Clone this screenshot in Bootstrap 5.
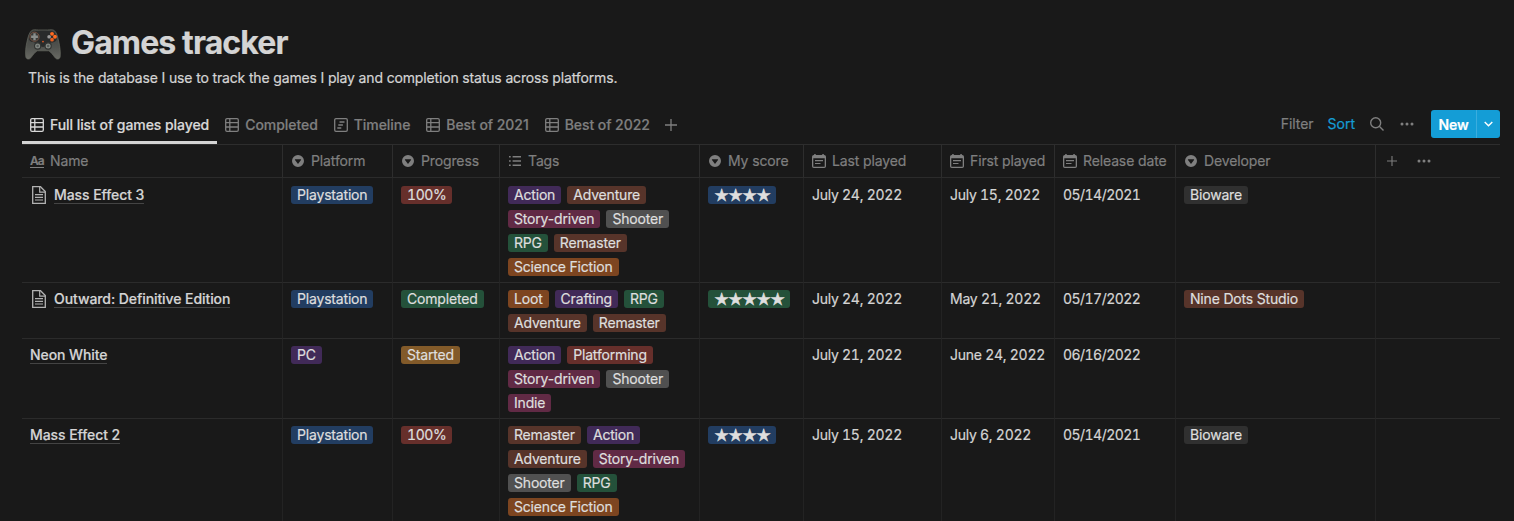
<!DOCTYPE html>
<html lang="en" data-bs-theme="dark">
<head>
<meta charset="utf-8">
<meta name="viewport" content="width=device-width, initial-scale=1">
<title>Games tracker</title>
<link href="https://cdn.jsdelivr.net/npm/bootstrap@5.3.0/dist/css/bootstrap.min.css" rel="stylesheet">
<style>
body{background:#191919;color:#d4d4d4;font-family:Inter,"Liberation Sans",sans-serif;font-size:14px;line-height:20px;height:521px;overflow:hidden;-webkit-text-stroke:.2px currentColor}
svg{flex:none;display:block}
.page{padding:23px 14px 0 22px}
.page-icon{margin:3px 10px 0 2px}
.page-title{font-size:32px;line-height:40px;font-weight:700;letter-spacing:-.88px;color:#d4d4d4}
.intro{padding:5px 6px 0;height:45px;letter-spacing:-.15px}
.views{height:36px}
.view-tab{height:36px;padding:1px 8px 0;color:#7f7f7f;font-weight:500;gap:6px;border-bottom:3px solid transparent;white-space:nowrap;letter-spacing:-.06px}
.view-tab.active{color:#d8d8d8;border-color:#d4d4d4;letter-spacing:-.06px}
.add-view{margin-left:-1px}
.tool{color:#7f7f7f}
.filter{margin-right:14px;letter-spacing:-.05px}
.search{margin:0 15px}
.more{margin:0 17px 0 1px}
.accent{color:#159cd3}
.new-btn{--bs-btn-bg:#149dd6;--bs-btn-color:#fff;--bs-btn-border-width:0;--bs-btn-border-radius:3px;height:28px;font-size:14px;line-height:20px;font-weight:600;padding:0;letter-spacing:-.1px}
.new-btn .label{width:45px;text-align:center;padding-top:1px}
.split{width:24px;padding-left:7px;border-left:1px solid #3badde}
.games{table-layout:fixed;border-collapse:separate;border-spacing:0;width:1478px;margin:0;border-top:1px solid #2d2d2d}
.games th,.games td{border-right:1px solid #232323;border-bottom:1px solid #2b2b2b;vertical-align:top;white-space:nowrap}
.games th{height:33px;padding:0 8px;font-weight:400;color:#7f7f7f;vertical-align:middle;border-right-color:#2d2d2d;letter-spacing:-.13px}
.games th:last-child,.games td:last-child{border-right:0}
.games th:last-child{padding-left:7px}
.games td{padding:7px 8px 6px}
.games tbody tr:first-child td{padding-top:8px}
.games td:nth-child(3){font-variant-numeric:tabular-nums}
.games td:nth-child(3) .red{letter-spacing:-.4px}
.head{gap:6px}
.head svg[width="12"]{margin-left:1px;margin-right:1px}
.aa{font-size:12px;line-height:12px;font-weight:600;border-bottom:1px solid #7f7f7f;width:14px;letter-spacing:-1px}
.line{height:18px;line-height:18px;font-variant-numeric:tabular-nums;letter-spacing:-.26px}
.games td:nth-child(8) .line{letter-spacing:-.54px}
.page-glyph{margin-left:2px;margin-right:8px}
.game{font-weight:500;border-bottom:1px solid #444;line-height:18px;height:18px;letter-spacing:-.08px;font-variant-numeric:normal}
.tags{display:flex;flex-wrap:wrap;gap:6px}
.tagx{height:18px;line-height:18px;border-radius:3px;padding:0 6px;color:#dedede;background:#303030;letter-spacing:-.18px}
.blue{background:#223d61}.purple{background:#412a58}.red{background:#662f2b}.brown{background:#57342a}
.pink{background:#612a45}.gray{background:#505050}.green{background:#24513a}.orange{background:#7d4520}.yellow{background:#825a29}
.stars{font-family:"DejaVu Sans",sans-serif;font-size:17px;letter-spacing:-1.24px;padding:0 6px;-webkit-text-stroke-width:.5px}
</style>
</head>
<body>
<svg width="0" height="0" class="position-absolute">
<symbol id="i-table" viewBox="0 0 14 14"><path d="M2 .7h10A1.3 1.3 0 0 1 13.3 2v10a1.3 1.3 0 0 1-1.3 1.3H2A1.3 1.3 0 0 1 .7 12V2A1.3 1.3 0 0 1 2 .7zM.7 4.7h12.6M.7 9h12.6M4.8.7v12.6" fill="none" stroke="currentColor" stroke-width="1.3"/></symbol>
<symbol id="i-timeline" viewBox="0 0 14 14"><path d="M2 .7h10A1.3 1.3 0 0 1 13.3 2v10a1.3 1.3 0 0 1-1.3 1.3H2A1.3 1.3 0 0 1 .7 12V2A1.3 1.3 0 0 1 2 .7zM5.500 4h5M4.300 7h4.600M3.300 10h4" fill="none" stroke="currentColor" stroke-width="1.3"/></symbol>
<symbol id="i-select" viewBox="0 0 12 12"><path fill="currentColor" fill-rule="evenodd" d="M6 0a6 6 0 1 1 0 12A6 6 0 0 1 6 0zM3.300 4.200a.4.4 0 0 0-.3.7l2.600 3.500a.5.5 0 0 0 .8 0L9 4.900a.4.4 0 0 0-.3-.7z"/></symbol>
<symbol id="i-date" viewBox="0 0 14 14"><path fill="currentColor" fill-rule="evenodd" d="M2.200 0h1.500v1h6.600V0h1.500v1h.400A1.800 1.800 0 0 1 14 2.800v9.400a1.800 1.800 0 0 1-1.800 1.800H1.800A1.800 1.800 0 0 1 0 12.200V2.800A1.800 1.800 0 0 1 1.800 1h.4zM1.300 4.200v8a.5.5 0 0 0 .5.5h10.400a.5.5 0 0 0 .5-.5v-8zM3 6h8v1.200H3zm0 2.900h5.500v1.200H3z"/></symbol>
<symbol id="i-list" viewBox="0 0 12 12"><path fill="currentColor" d="M0 .9h1.700v1.500H0zm3.600 0H12v1.500H3.600zM0 5.200h1.700v1.500H0zm3.600 0H12v1.500H3.600zM0 9.500h1.700V11H0zm3.600 0H12V11H3.600z"/></symbol>
<symbol id="i-plus" viewBox="0 0 12 12"><path d="M6 0v12M0 6h12" stroke="currentColor" stroke-width="1.3"/></symbol>
<symbol id="i-dots" viewBox="0 0 14 4"><g fill="currentColor"><circle cx="2" cy="2" r="1.500"/><circle cx="7" cy="2" r="1.500"/><circle cx="12" cy="2" r="1.500"/></g></symbol>
<symbol id="i-page" viewBox="0 0 14 18"><path d="M.7.700h7.800l4.800 4.800v11.800H.7z" fill="none" stroke="#b2b2b2" stroke-width="1.300"/><path d="M7.700 1v5.200H13M3 8.700h8M3 11.300h8M3 14h8" fill="none" stroke="#b2b2b2" stroke-width="1.200"/></symbol>
</svg>
<main class="page">
<header class="d-flex align-items-center">
<svg width="37" height="32" viewBox="0 0 38 33" class="page-icon" preserveAspectRatio="none">
<defs><linearGradient id="pad" x1="0" y1="0" x2="0" y2="1"><stop offset="0" stop-color="#3b3d3b"/><stop offset=".6" stop-color="#51534f"/><stop offset="1" stop-color="#696a64"/></linearGradient></defs>
<path d="M8 1.500c2-1.300 4-.5 7-.5h9c3 0 5-.8 7 .5 2.500 2 3.500 6 4.800 12 1 5 1.900 10 1.400 15-.4 2.700-3.500 3.400-5.200 1.200-2.300-3-4-5.500-6.500-7.200h-12C11 24.200 9.300 26.700 7 29.700 5.300 31.900 2.200 31.200 1.800 28.500 1.300 23.500 1.800 18.500 3 13.500 4.200 7.500 5.500 3.500 8 1.500z" fill="url(#pad)" stroke="#666860" stroke-width=".7"/>
<path d="M8 3c7-1.500 16-1.500 23 0 3 3 4 8 1 10s-7 0-9 4c-2 2-5 2-7 0-2-4-6-2-9-4s-2-7 1-10z" fill="#292b2b"/>
<circle cx="10.800" cy="8" r="4.700" fill="#373a39" stroke="#76503f"/>
<path d="M10.800 4.500v7M7.300 8h7" stroke="#8a8d8b" stroke-width="2.400"/>
<circle cx="28.800" cy="5" r="2" fill="#ff6a21"/><circle cx="31.800" cy="8" r="2" fill="#ff6a21"/><circle cx="25.800" cy="8" r="1.900" fill="#9a9a9a"/><circle cx="28.800" cy="11" r="1.900" fill="#e85e20"/>
<circle cx="19.500" cy="13" r="1" fill="#d45625"/>
<g fill="#848984" stroke="#323432" stroke-width="1.200"><circle cx="14" cy="17.500" r="3.200"/><circle cx="24.800" cy="17.500" r="3.200"/></g><g fill="#565b59"><circle cx="14" cy="17.500" r="1.300"/><circle cx="24.800" cy="17.500" r="1.300"/></g>
</svg>
<h1 class="page-title mb-0">Games tracker</h1>
</header>
<p class="intro mb-0">This is the database I use to track the games I play and completion status across platforms.</p>
<div class="views d-flex justify-content-between">
<nav class="d-flex">
<a class="view-tab active d-flex align-items-center text-decoration-none"><svg width="14" height="14"><use href="#i-table"/></svg><span>Full list of games played</span></a>
<a class="view-tab d-flex align-items-center text-decoration-none"><svg width="14" height="14"><use href="#i-table"/></svg><span>Completed</span></a>
<a class="view-tab d-flex align-items-center text-decoration-none"><svg width="14" height="14"><use href="#i-timeline"/></svg><span>Timeline</span></a>
<a class="view-tab d-flex align-items-center text-decoration-none"><svg width="14" height="14"><use href="#i-table"/></svg><span>Best of 2021</span></a>
<a class="view-tab d-flex align-items-center text-decoration-none"><svg width="14" height="14"><use href="#i-table"/></svg><span>Best of 2022</span></a>
<a class="view-tab add-view d-flex align-items-center text-decoration-none px-1"><svg width="12" height="12" class="ms-1"><use href="#i-plus"/></svg></a>
</nav>
<div class="d-flex align-items-center tool mb-1">
<span class="filter">Filter</span><span class="accent">Sort</span>
<svg width="14" height="14" viewBox="0 0 14 14" class="search" fill="none" stroke="currentColor" stroke-width="1.400"><circle cx="5.700" cy="5.700" r="5"/><path d="M9.300 9.300l4.200 4.200"/></svg>
<svg width="14" height="4" class="more"><use href="#i-dots"/></svg>
<div class="btn new-btn d-flex align-items-center"><span class="label">New</span><span class="split d-flex align-items-center h-100"><svg width="9" height="6" viewBox="0 0 9 6" fill="none" stroke="#fff" stroke-width="1.400"><path d="M.7.900l3.800 3.800L8.300.900"/></svg></span></div>
</div>
</div>
<table class="games">
<colgroup><col style="width:261px"><col style="width:110px"><col style="width:107px"><col style="width:200px"><col style="width:104px"><col style="width:138px"><col style="width:113px"><col style="width:121px"><col style="width:200px"><col style="width:124px"></colgroup>
<thead><tr>
<th><div class="d-flex align-items-center head"><span class="aa">Aa</span><span>Name</span></div></th>
<th><div class="d-flex align-items-center head"><svg width="12" height="12"><use href="#i-select"/></svg><span>Platform</span></div></th>
<th><div class="d-flex align-items-center head"><svg width="12" height="12"><use href="#i-select"/></svg><span>Progress</span></div></th>
<th><div class="d-flex align-items-center head"><svg width="12" height="12"><use href="#i-list"/></svg><span>Tags</span></div></th>
<th><div class="d-flex align-items-center head"><svg width="12" height="12"><use href="#i-select"/></svg><span>My score</span></div></th>
<th><div class="d-flex align-items-center head"><svg width="14" height="14"><use href="#i-date"/></svg><span>Last played</span></div></th>
<th><div class="d-flex align-items-center head"><svg width="14" height="14"><use href="#i-date"/></svg><span>First played</span></div></th>
<th><div class="d-flex align-items-center head"><svg width="14" height="14"><use href="#i-date"/></svg><span>Release date</span></div></th>
<th><div class="d-flex align-items-center head"><svg width="12" height="12"><use href="#i-select"/></svg><span>Developer</span></div></th>
<th><div class="d-flex align-items-center"><svg width="10" height="10" class="ms-1 me-1"><use href="#i-plus"/></svg><svg width="14" height="4" class="ms-3"><use href="#i-dots"/></svg></div></th>
</tr></thead>
<tbody>
<tr><td><div class="line d-flex"><svg width="14" height="18" class="page-glyph"><use href="#i-page"/></svg><span class="game">Mass Effect 3</span></div></td>
<td><div class="tags"><span class="tagx blue">Playstation</span></div></td><td><div class="tags"><span class="tagx red">100%</span></div></td>
<td><div class="tags"><span class="tagx purple">Action</span><span class="tagx brown">Adventure</span><span class="tagx pink">Story-driven</span><span class="tagx gray">Shooter</span><span class="tagx green">RPG</span><span class="tagx brown">Remaster</span><span class="tagx orange">Science Fiction</span></div></td>
<td><div class="tags"><span class="tagx blue stars">★★★★</span></div></td><td><div class="line">July 24, 2022</div></td><td><div class="line">July 15, 2022</div></td><td><div class="line">05/14/2021</div></td><td><div class="tags"><span class="tagx">Bioware</span></div></td><td></td></tr>
<tr><td><div class="line d-flex"><svg width="14" height="18" class="page-glyph"><use href="#i-page"/></svg><span class="game">Outward: Definitive Edition</span></div></td>
<td><div class="tags"><span class="tagx blue">Playstation</span></div></td><td><div class="tags"><span class="tagx green">Completed</span></div></td>
<td><div class="tags"><span class="tagx orange">Loot</span><span class="tagx purple">Crafting</span><span class="tagx green">RPG</span><span class="tagx brown">Adventure</span><span class="tagx brown">Remaster</span></div></td>
<td><div class="tags"><span class="tagx green stars">★★★★★</span></div></td><td><div class="line">July 24, 2022</div></td><td><div class="line">May 21, 2022</div></td><td><div class="line">05/17/2022</div></td><td><div class="tags"><span class="tagx brown">Nine Dots Studio</span></div></td><td></td></tr>
<tr><td><div class="line d-flex"><span class="game">Neon White</span></div></td>
<td><div class="tags"><span class="tagx purple">PC</span></div></td><td><div class="tags"><span class="tagx yellow">Started</span></div></td>
<td><div class="tags"><span class="tagx purple">Action</span><span class="tagx red">Platforming</span><span class="tagx pink">Story-driven</span><span class="tagx gray">Shooter</span><span class="tagx pink">Indie</span></div></td>
<td></td><td><div class="line">July 21, 2022</div></td><td><div class="line">June 24, 2022</div></td><td><div class="line">06/16/2022</div></td><td></td><td></td></tr>
<tr><td><div class="line d-flex"><span class="game">Mass Effect 2</span></div></td>
<td><div class="tags"><span class="tagx blue">Playstation</span></div></td><td><div class="tags"><span class="tagx red">100%</span></div></td>
<td><div class="tags"><span class="tagx brown">Remaster</span><span class="tagx purple">Action</span><span class="tagx brown">Adventure</span><span class="tagx pink">Story-driven</span><span class="tagx gray">Shooter</span><span class="tagx green">RPG</span><span class="tagx orange">Science Fiction</span></div></td>
<td><div class="tags"><span class="tagx blue stars">★★★★</span></div></td><td><div class="line">July 15, 2022</div></td><td><div class="line">July 6, 2022</div></td><td><div class="line">05/14/2021</div></td><td><div class="tags"><span class="tagx">Bioware</span></div></td><td></td></tr>
</tbody></table>
</main>
<script src="https://cdn.jsdelivr.net/npm/bootstrap@5.3.0/dist/js/bootstrap.bundle.min.js"></script>
</body>
</html>
